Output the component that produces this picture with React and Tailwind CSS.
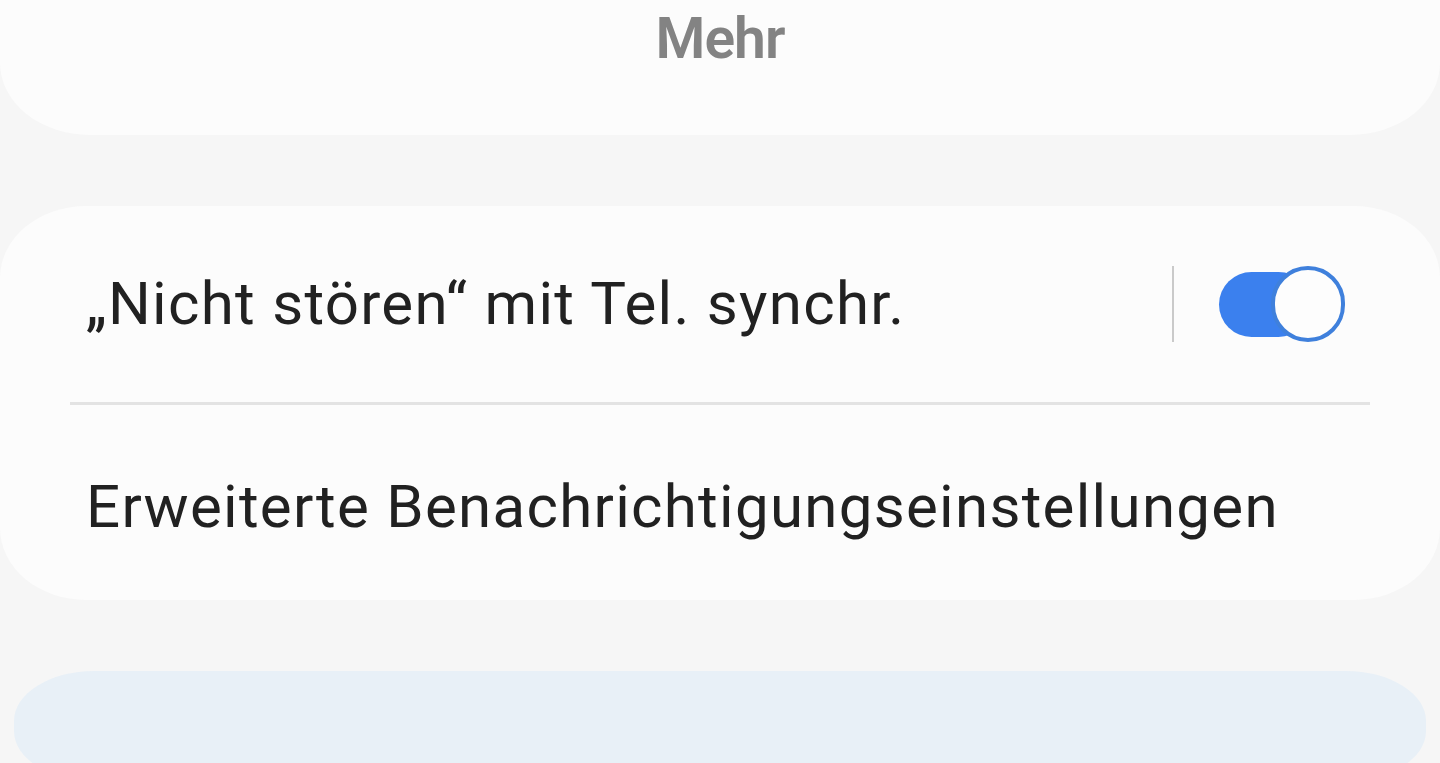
import React, { useState } from 'react';

const font = { fontFamily: 'Roboto, "Noto Sans", sans-serif' };

// Blue switch with white knob on the right (on state)
const Toggle = ({ on, onChange }) => (
  <button
    onClick={() => onChange(!on)}
    className="relative w-[126px] h-[76px] flex items-center"
  >
    <span className="absolute left-0 top-[6px] w-[92px] h-[65px] rounded-full bg-[#3b80ee]" />
    <span className="absolute right-0 top-0 w-[74px] h-[76px] rounded-full bg-[#fdfdfd] border-[4px] border-[#3f80dc]" />
  </button>
);

const App = () => {
  const [dndSync, setDndSync] = useState(true);

  return (
    <div className="w-[1440px] h-[763px] overflow-hidden bg-[#f6f6f6] text-[#212121]" style={font}>
      {/* Top card, mostly scrolled away */}
      <div className="-mt-[100px] h-[235px] bg-[#fcfcfc] rounded-bl-[90px_72px] rounded-br-[90px_72px] flex justify-center pt-[110px]">
        <span className="text-[57px] leading-none font-semibold text-[#838383] tracking-[-1px]">Mehr</span>
      </div>

      {/* Settings card */}
      <div className="mt-[71px] h-[394px] bg-[#fcfcfc] rounded-[86px/72px] flex flex-col">
        <div className="h-[196px] flex items-center pl-[86px] pr-[95px]">
          <span className="flex-1 text-[60px] leading-none tracking-[1.3px]">„Nicht stören“ mit Tel. synchr.</span>
          <span className="w-[2px] h-[76px] bg-[#cacaca] mr-[45px]" />
          <Toggle on={dndSync} onChange={setDndSync} />
        </div>
        <div className="mx-[70px] h-[3px] bg-[#e3e3e3]" />
        <div className="flex-1 flex items-center pl-[86px] pt-[8px]">
          <span className="text-[60px] leading-none tracking-[1.3px]">Erweiterte Benachrichtigungseinstellungen</span>
        </div>
      </div>

      {/* Bottom button, cut off */}
      <div className="mt-[71px] mx-[14px] h-[110px] bg-[#e8f0f7] rounded-[80px/50px]" />
    </div>
  );
};

export default App;
